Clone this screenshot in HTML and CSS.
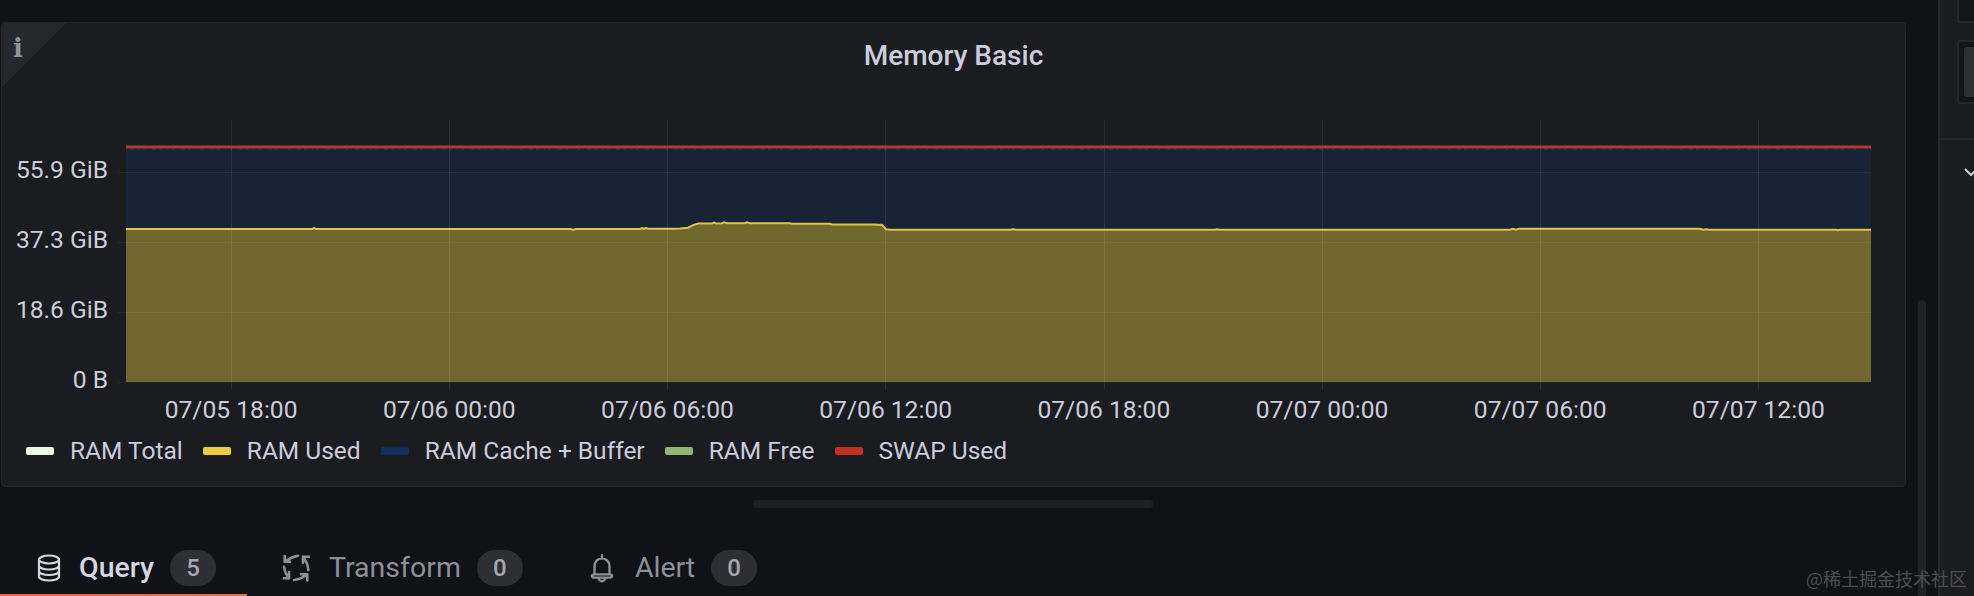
FILE: index.html
```html
<!DOCTYPE html>
<html lang="en">
<head>
<meta charset="utf-8">
<title>Memory Basic</title>
<link rel="stylesheet" href="styles.css">
</head>
<body>
<div class="page">
  <main class="main">
    <section class="panel">
      <div class="corner"><span class="corner-i">i</span></div>
      <h2 class="title">Memory Basic</h2>
      <div class="chart">
        <div class="y-axis">
          <span>55.9 GiB</span>
          <span>37.3 GiB</span>
          <span>18.6 GiB</span>
          <span>0 B</span>
        </div>
        <svg class="plot" width="1753" height="272" viewBox="118 120 1753 272">
          <path class="fill-blue" d="M126 148H1871V229H126Z"/>
          <path class="fill-yellow" d="M126 229H312l2-1 2 1H570l3 .8 3-.8H640l2-1 2 .8 2-.8 2 .8H672l8-.3 8-.8 5-2.600 5-1.600H712l2-1 2 1 6-.3 2-.8 3 .8H745l2-.8 3 .8H790l2 .6H830l2 .6H875l3 .4 4 0 2 2 2 2.500 4 .5H1010l3-.5 3 .5H1215l2-.6 2 .6H1510l3-1 3 1 3-1 H1700l3 1 3-.5 3 .5 H1836l2 .5 2-.5 H1871V382H126Z"/>
          <g class="grid">
            <path d="M118 172.500H1871M118 242.500H1871M118 312.500H1871M118 382.500H1871"/>
            <path class="grid-v" d="M231.500 120V390M449.500 120V390M667.500 120V390M885.500 120V390M1104.500 120V390M1322.500 120V390M1540.500 120V390M1758.500 120V390"/>
          </g>
          <path class="line-yellow" d="M126 229H312l2-1 2 1H570l3 .8 3-.8H640l2-1 2 .8 2-.8 2 .8H672l8-.3 8-.8 5-2.600 5-1.600H712l2-1 2 1 6-.3 2-.8 3 .8H745l2-.8 3 .8H790l2 .6H830l2 .6H875l3 .4 4 0 2 2 2 2.500 4 .5H1010l3-.5 3 .5H1215l2-.6 2 .6H1510l3-1 3 1 3-1 H1700l3 1 3-.5 3 .5 H1836l2 .5 2-.5 H1871"/>
          <path class="line-speck" d="M130 149H1860"/>
          <path class="line-red" d="M126 147H1871"/>
        </svg>
      </div>
      <div class="x-axis">
        <span>07/05 18:00</span>
        <span>07/06 00:00</span>
        <span>07/06 06:00</span>
        <span>07/06 12:00</span>
        <span>07/06 18:00</span>
        <span>07/07 00:00</span>
        <span>07/07 06:00</span>
        <span>07/07 12:00</span>
      </div>
      <ul class="legend">
        <li><i class="swatch swatch-white"></i>RAM Total</li>
        <li><i class="swatch swatch-yellow"></i>RAM Used</li>
        <li><i class="swatch swatch-blue"></i>RAM Cache + Buffer</li>
        <li><i class="swatch swatch-green"></i>RAM Free</li>
        <li><i class="swatch swatch-red"></i>SWAP Used</li>
      </ul>
    </section>
    <div class="splitter"></div>
    <nav class="tabs">
      <a class="tab tab-active">
        <svg class="tab-icon" width="24" height="28" viewBox="0 0 24 28"><ellipse cx="12" cy="5.500" rx="10" ry="4"/><path d="M2 5.500V22.500C2 25 7 26.500 12 26.500S22 25 22 22.500V5.500M2 11.500C2 14 7 15.500 12 15.500S22 14 22 11.500M2 17C2 19.500 7 21 12 21S22 19.500 22 17"/><path d="M5.500 14.500v.1M5.500 20v.1"/></svg>
        <span class="tab-label">Query</span>
        <span class="badge">5</span>
      </a>
      <a class="tab">
        <svg class="tab-icon tab-icon-thick" width="28" height="28" viewBox="0 0 28 28"><path d="M15 1.700C10 2.500 6 4.500 1.700 7.700M1.700 2V7.700H7"/><path d="M25.300 16C25 11 23 6.500 20 2.700M26 2.700H20V8.700"/><path d="M11 26C16 25.500 20.500 23.500 24.300 20.300M18 20.300H24.300V26.500"/><path d="M1 12.700C1.500 17 3 21 6 24.300M6 18V24.300H.7"/></svg>
        <span class="tab-label">Transform</span>
        <span class="badge">0</span>
      </a>
      <a class="tab">
        <svg class="tab-icon tab-icon-bell" width="24" height="30" viewBox="0 0 22 28"><path d="M4 20V12.500C4 8 7 5 11 5S18 8 18 12.500V20M1.500 21.500C1.500 20.500 2.500 20 4 20H18C19.500 20 20.500 20.500 20.500 21.500S19.500 23 18 23H4C2.500 23 1.500 22.500 1.500 21.500ZM11 5V2M8 23C8 25 9.500 26.500 11 26.500S14 25 14 23"/></svg>
        <span class="tab-label">Alert</span>
        <span class="badge">0</span>
      </a>
    </nav>
    <div class="tab-underline"></div>
    <div class="scrollbar"></div>
  </main>
  <aside class="side">
    <div class="side-top"></div>
    <div class="side-box"><div class="side-thumb"></div></div>
    <div class="side-row">
      <svg class="side-chevron" width="14" height="10" viewBox="0 0 14 10"><path d="M1 2L7 8L13 2"/></svg>
    </div>
  </aside>
  <div class="watermark">@稀土掘金技术社区</div>
</div>
</body>
</html>
```

FILE: styles.css
```css
* { box-sizing: border-box; }
html, body { margin: 0; padding: 0; background: #111217; }
body { font-family: Roboto, "Liberation Sans", sans-serif; overflow: hidden; }
.page { position: relative; display: flex; width: 1974px; height: 596px; overflow: hidden; }

.main { position: relative; width: 1938px; flex: none; padding: 22px 0 0 1px; background: #111217; }

.panel { position: relative; width: 1905px; height: 465px; background: #1b1c20; border: 1.5px solid #25272c; border-radius: 4px; overflow: hidden; }
.corner { position: absolute; left: 0; top: 0; width: 64px; height: 64px; background: #25282e; clip-path: polygon(0 0, 100% 0, 0 100%); }
.corner-i { position: absolute; left: 11px; top: 10px; font: 700 26px/30px "DejaVu Serif", serif; color: #90929a; }
.title { margin: 0; height: 97px; padding-top: 16px; text-align: center; font-size: 28px; line-height: 34px; font-weight: 500; color: #ccccdc; }

.chart { display: flex; height: 272px; }
.y-axis { display: flex; flex-direction: column; width: 116px; flex: none; padding: 15px 10px 0 0; text-align: right; font-size: 24.600px; color: #ccccdc; }
.y-axis span { display: block; height: 70.500px; line-height: 70px; }
.plot { flex: none; display: block; }
.fill-blue { fill: #182336; }
.fill-yellow { fill: #716830; }
.grid path { stroke: rgba(255, 255, 255, .05); stroke-width: 1; fill: none; }
.grid .grid-v { stroke: rgba(255, 255, 255, .08); }
.line-yellow { fill: none; stroke: #dcc649; stroke-width: 2; }
.line-red { fill: none; stroke: #ab3c32; stroke-width: 3; }
.line-speck { fill: none; stroke: #3a3c48; stroke-width: 1; stroke-dasharray: 3 5 1 4 2 7 4 3; }

.x-axis { display: grid; grid-template-columns: repeat(8, 218.200px); margin: 2px 0 0 120px; height: 32px; font-size: 24.600px; line-height: 32px; color: #ccccdc; text-align: center; }

.legend { display: flex; list-style: none; margin: 9px 0 0 24px; padding: 0; gap: 20px; font-size: 24.500px; line-height: 32px; color: #ccccdc; }
.legend li { display: flex; align-items: center; }
.swatch { width: 28px; height: 8px; border-radius: 2px; margin-right: 16px; }
.swatch-white { background: #eef8e4; }
.swatch-yellow { background: #eccb45; }
.swatch-blue { background: #12305f; }
.swatch-green { background: #8fb772; }
.swatch-red { background: #c4301f; }

.splitter { width: 400px; height: 8px; margin: 13px 0 0 752px; border-radius: 4px; background: #1f2024; }

.tabs { display: flex; margin: 42px 0 0 36px; }
.tab { display: flex; align-items: center; height: 36px; margin-right: 67px; color: #8e8f99; font-size: 28.500px; }
.tab-active { color: #d5d6e2; font-weight: 500; }
.tab-icon { flex: none; margin-right: 18px; fill: none; stroke: currentColor; stroke-width: 2.200; stroke-linecap: round; stroke-linejoin: round; }
.tab-icon-thick { stroke-width: 2.600; }
.tab-icon-bell { margin-right: 21px; }
.tab-label { line-height: 36px; }
.badge { display: flex; align-items: center; justify-content: center; min-width: 46px; height: 36px; margin-left: 16px; border-radius: 18px; background: #2d2f34; font-size: 24px; font-weight: 500; color: #a6a7b0; }

.tab-underline { position: absolute; left: 0; bottom: 0; width: 247px; height: 2px; background: linear-gradient(90deg, #f5623c, #e8703a); }
.scrollbar { position: absolute; left: 1918px; top: 300px; width: 8px; height: 296px; border-radius: 4px 4px 0 0; background: #202226; }

.side { flex: 1; background: #1b1c20; border-left: 2px solid #25272c; padding-left: 17px; }
.side-top { height: 23px; border: 2px solid #25272c; border-top: 0; border-right: 0; border-radius: 0 0 0 3px; background: #141519; }
.side-box { height: 64px; margin-top: 17px; padding: 5px 0 5px 5px; border: 2px solid #25272c; border-right: 0; border-radius: 3px 0 0 3px; background: #141519; }
.side-thumb { height: 100%; border-radius: 3px 0 0 3px; background: #2f3035; }
.side-row { position: relative; height: 70px; margin: 34px 0 0 -17px; border-top: 2px solid #25272c; padding: 27px 0 0 24px; }
.side-chevron { display: block; fill: none; stroke: #ccccdc; stroke-width: 2; }

.watermark { position: absolute; left: 1806px; top: 565px; font-family: "Noto Sans CJK SC", sans-serif; font-size: 18px; line-height: 26px; color: #4c4d52; white-space: nowrap; }
```
